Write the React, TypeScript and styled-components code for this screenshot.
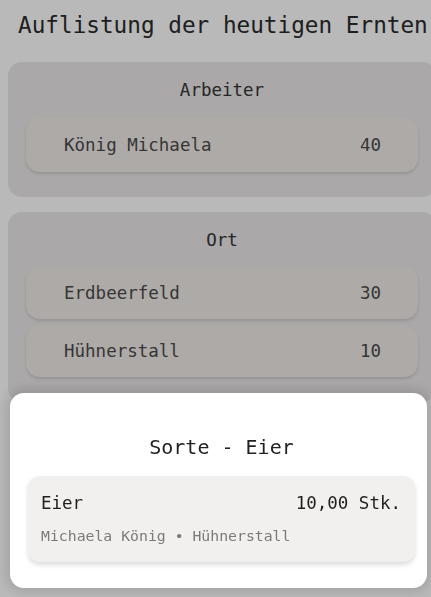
import { createGlobalStyle, styled } from "styled-components";

const GlobalStyle = createGlobalStyle`
  html, body {
    margin: 0;
    padding: 0;
    overflow: hidden;
    background-color: #f7f7f8;
  }
  body {
    font-family: "DejaVu Sans Mono", "Liberation Mono", monospace;
  }
`;

const Page = styled.div`
  width: 436px;
  padding: 12px 0 0 8px;
  box-sizing: border-box;
  display: flex;
  flex-direction: column;
`;

const Title = styled.h1`
  margin: 0 0 23px 10px;
  font-size: 22.7px;
  line-height: 27px;
  font-weight: normal;
  color: #2a2a2a;
  white-space: nowrap;
`;

const Section = styled.section`
  background-color: #e3e0e0;
  border-radius: 14px;
  padding: 14px 18px 25px;
  margin-bottom: 15px;
  display: flex;
  flex-direction: column;
  gap: 6px;
`;

const SectionTitle = styled.h2`
  margin: 0 0 7px;
  font-size: 17.5px;
  line-height: 28px;
  font-weight: normal;
  text-align: center;
  color: #333;
`;

const Row = styled.div<{ $tall?: boolean }>`
  height: ${(p) => (p.$tall ? 55 : 52)}px;
  padding: 0 37px 0 38px;
  display: flex;
  align-items: center;
  justify-content: space-between;
  background-color: #e8e3e1;
  border-radius: 14px;
  box-shadow: 0 2px 3px rgba(0, 0, 0, 0.12);
  font-size: 17.5px;
  color: #494949;
`;

const Overlay = styled.div`
  position: fixed;
  inset: 0;
  background-color: rgba(0, 0, 0, 0.25);
  display: flex;
  align-items: flex-end;
  padding: 0 4px 9px 10px;
`;

const Sheet = styled.div`
  flex: 1;
  background-color: #fff;
  border-radius: 14px;
  padding: 40px 12px 26px 18px;
  box-shadow: 0 0 12px 4px rgba(0, 0, 0, 0.12);
`;

const SheetTitle = styled.h2`
  margin: 0 0 15px;
  font-size: 20px;
  line-height: 28px;
  font-weight: normal;
  text-align: center;
  color: #222;
`;

const Entry = styled.div`
  background-color: #f2f0ee;
  border-radius: 12px;
  padding: 15px 14px 15px 13px;
  box-shadow: 0 3px 5px rgba(0, 0, 0, 0.14);
  display: flex;
  flex-direction: column;
  gap: 10px;
`;

const EntryHead = styled.div`
  display: flex;
  justify-content: space-between;
  font-size: 17.5px;
  line-height: 24px;
  color: #1f1f1f;
`;

const EntryMeta = styled.div`
  font-size: 14.8px;
  line-height: 22px;
  color: #7a7a7a;
`;

const workers = [{ name: "König Michaela", count: 40 }];
const places = [
  { name: "Erdbeerfeld", count: 30 },
  { name: "Hühnerstall", count: 10 },
];

export default function App() {
  return (
    <>
      <GlobalStyle />
      <Page>
        <Title>Auflistung der heutigen Ernten</Title>
        <Section>
          <SectionTitle>Arbeiter</SectionTitle>
          {workers.map((w) => (
            <Row key={w.name} $tall>
              <span>{w.name}</span>
              <span>{w.count}</span>
            </Row>
          ))}
        </Section>
        <Section>
          <SectionTitle>Ort</SectionTitle>
          {places.map((p) => (
            <Row key={p.name}>
              <span>{p.name}</span>
              <span>{p.count}</span>
            </Row>
          ))}
        </Section>
      </Page>
      <Overlay>
        <Sheet>
          <SheetTitle>Sorte - Eier</SheetTitle>
          <Entry>
            <EntryHead>
              <span>Eier</span>
              <span>10,00 Stk.</span>
            </EntryHead>
            <EntryMeta>Michaela König • Hühnerstall</EntryMeta>
          </Entry>
        </Sheet>
      </Overlay>
    </>
  );
}
